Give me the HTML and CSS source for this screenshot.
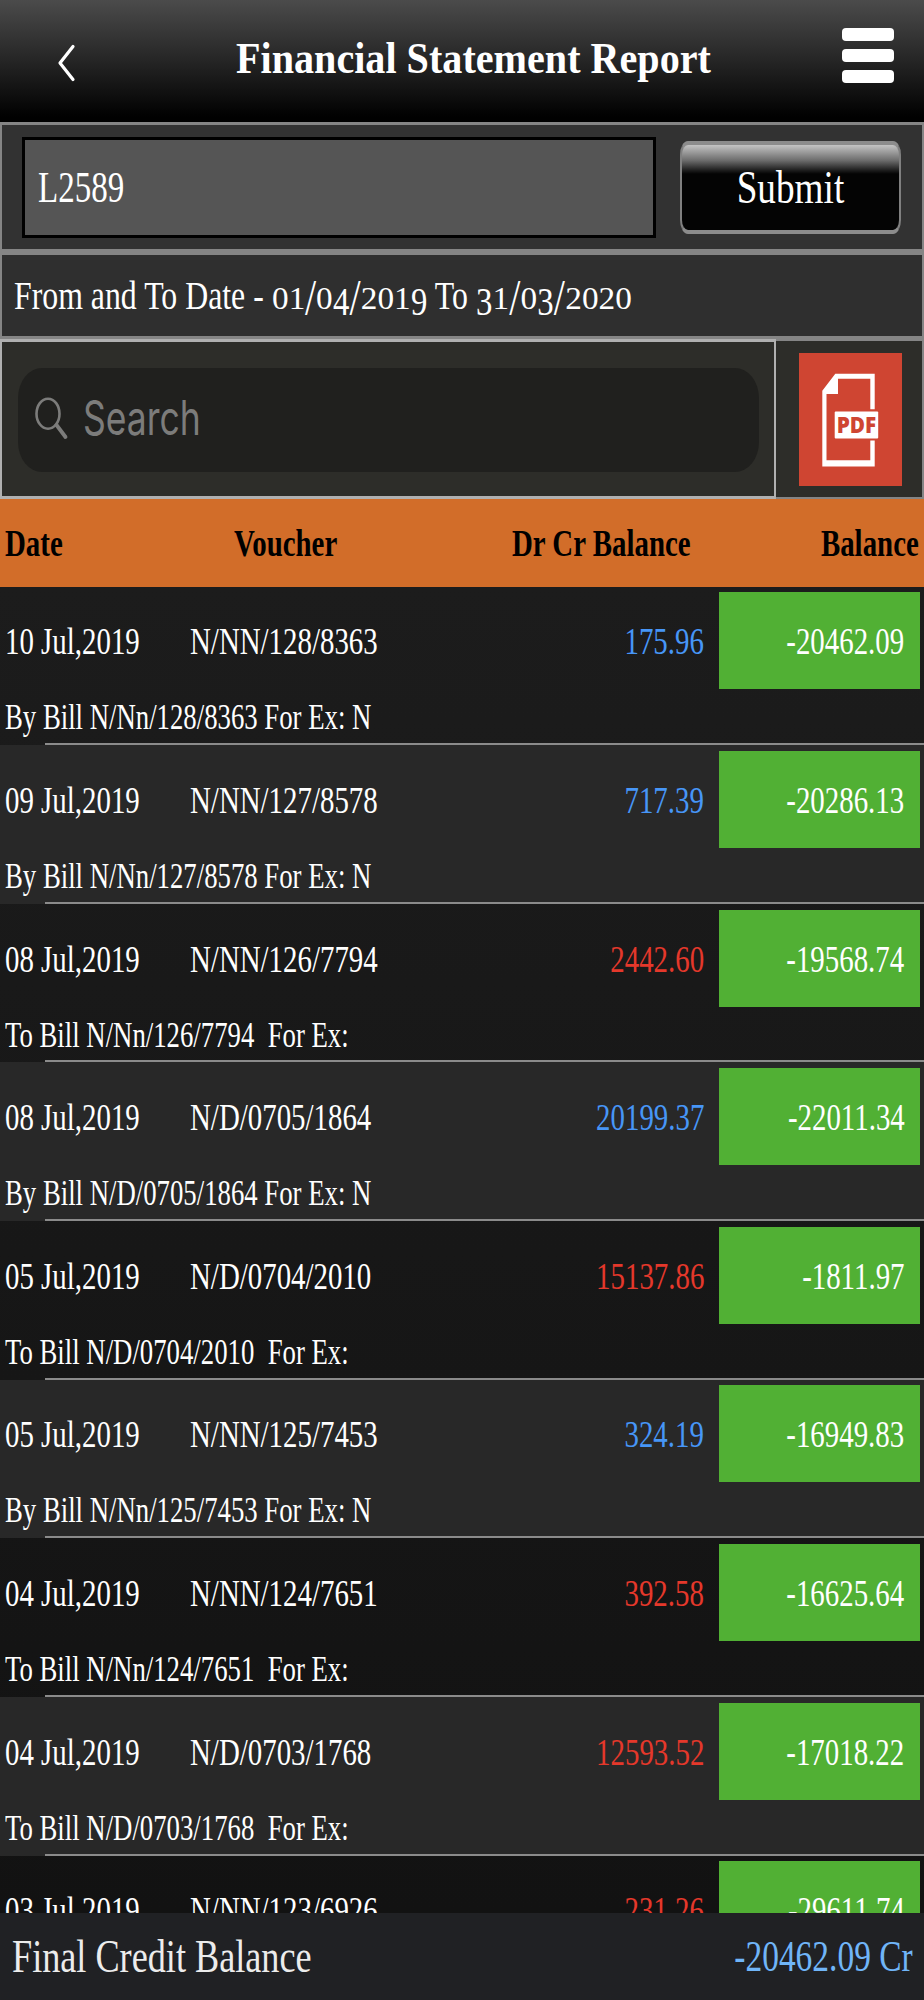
FILE: index.html
```html
<!DOCTYPE html>
<html lang="en">
<head>
    <meta charset="UTF-8">
    <meta name="viewport" content="width=device-width, initial-scale=1.0">
    <title>Financial Statement Report</title>
    <link rel="stylesheet" href="styles.css">
</head>
<body>

    <!-- Top bar -->
    <header class="topbar">
        <svg class="back" width="20" height="40" viewBox="0 0 20 40">
            <path d="M16 4.5 L3 21 L16 37.5" fill="none" stroke="#fff" stroke-width="3.2" stroke-linecap="round" stroke-linejoin="round"/>
        </svg>
        <h1><span class="text">Financial Statement Report</span></h1>
        <div class="menu">
            <i></i>
            <i></i>
            <i></i>
        </div>
    </header>

    <!-- Account code -->
    <section class="account">
        <div class="account-input"><span class="text">L2589</span></div>
        <div class="submit-btn"><span class="text">Submit</span></div>
    </section>

    <!-- Date range -->
    <section class="period">
        <span class="text">From and To Date - <span class="date"><b class="w2">01</b><b class="slash">/</b><b class="w1">0</b><b class="low">4</b><b class="slash">/</b><b class="w3">201</b><b class="low">9</b></span> To <span class="date"><b class="low">3</b><b class="w1">1</b><b class="slash">/</b><b class="w1">0</b><b class="low">3</b><b class="slash">/</b><b class="w4">2020</b></span></span>
    </section>

    <!-- Search and PDF export -->
    <section class="tools">
        <div class="search">
            <div class="search-box">
                <svg width="36" height="46" viewBox="0 0 36 46">
                    <ellipse cx="14" cy="17.7" rx="11.5" ry="15" fill="none" stroke="#7c7c7b" stroke-width="2.6"/>
                    <path d="M22.5 29 L31.5 41" stroke="#7c7c7b" stroke-width="3.8" stroke-linecap="round"/>
                </svg>
                <span class="text">Search</span>
            </div>
        </div>
        <div class="export">
            <svg width="103" height="133" viewBox="0 0 103 133">
                <rect width="103" height="133" fill="#cf4532"/>
                <path d="M36.3 20.7 H75.7 V56.3 H71.3 V25.7 H39 V41 H27.5 V107.3 H71.3 V87.5 H75.7 V113.5 H23.3 V37.7 Z" fill="#fff"/>
                <rect x="35.7" y="58.5" width="43.5" height="27" rx="1" fill="#fff"/>
                <text x="37.7" y="80" textLength="39.5" lengthAdjust="spacingAndGlyphs" class="pdf-label">PDF</text>
            </svg>
        </div>
    </section>

    <!-- Statement -->
    <div class="list-head">
        <span class="text">Date</span>
        <span class="text">Voucher</span>
        <span class="text">Dr Cr Balance</span>
        <span class="text right">Balance</span>
    </div>

    <main class="list">
        <div class="entry">
            <div class="entry-line">
                <span class="text">10 Jul,2019</span>
                <span class="text">N/NN/128/8363</span>
                <span class="text right credit">175.96</span>
                <div class="balance"><span class="text right">-20462.09</span></div>
            </div>
            <p><span class="text">By Bill N/Nn/128/8363 For Ex: N</span></p>
        </div>

        <div class="entry">
            <div class="entry-line">
                <span class="text">09 Jul,2019</span>
                <span class="text">N/NN/127/8578</span>
                <span class="text right credit">717.39</span>
                <div class="balance"><span class="text right">-20286.13</span></div>
            </div>
            <p><span class="text">By Bill N/Nn/127/8578 For Ex: N</span></p>
        </div>

        <div class="entry">
            <div class="entry-line">
                <span class="text">08 Jul,2019</span>
                <span class="text">N/NN/126/7794</span>
                <span class="text right debit">2442.60</span>
                <div class="balance"><span class="text right">-19568.74</span></div>
            </div>
            <p><span class="text">To Bill N/Nn/126/7794&nbsp; For Ex:</span></p>
        </div>

        <div class="entry">
            <div class="entry-line">
                <span class="text">08 Jul,2019</span>
                <span class="text">N/D/0705/1864</span>
                <span class="text right credit">20199.37</span>
                <div class="balance"><span class="text right">-22011.34</span></div>
            </div>
            <p><span class="text">By Bill N/D/0705/1864 For Ex: N</span></p>
        </div>

        <div class="entry">
            <div class="entry-line">
                <span class="text">05 Jul,2019</span>
                <span class="text">N/D/0704/2010</span>
                <span class="text right debit">15137.86</span>
                <div class="balance"><span class="text right">-1811.97</span></div>
            </div>
            <p><span class="text">To Bill N/D/0704/2010&nbsp; For Ex:</span></p>
        </div>

        <div class="entry">
            <div class="entry-line">
                <span class="text">05 Jul,2019</span>
                <span class="text">N/NN/125/7453</span>
                <span class="text right credit">324.19</span>
                <div class="balance"><span class="text right">-16949.83</span></div>
            </div>
            <p><span class="text">By Bill N/Nn/125/7453 For Ex: N</span></p>
        </div>

        <div class="entry">
            <div class="entry-line">
                <span class="text">04 Jul,2019</span>
                <span class="text">N/NN/124/7651</span>
                <span class="text right debit">392.58</span>
                <div class="balance"><span class="text right">-16625.64</span></div>
            </div>
            <p><span class="text">To Bill N/Nn/124/7651&nbsp; For Ex:</span></p>
        </div>

        <div class="entry">
            <div class="entry-line">
                <span class="text">04 Jul,2019</span>
                <span class="text">N/D/0703/1768</span>
                <span class="text right debit">12593.52</span>
                <div class="balance"><span class="text right">-17018.22</span></div>
            </div>
            <p><span class="text">To Bill N/D/0703/1768&nbsp; For Ex:</span></p>
        </div>

        <div class="entry">
            <div class="entry-line">
                <span class="text">03 Jul,2019</span>
                <span class="text">N/NN/123/6926</span>
                <span class="text right debit">231.26</span>
                <div class="balance"><span class="text right">-29611.74</span></div>
            </div>
        </div>
    </main>

    <!-- Total -->
    <footer class="total">
        <span class="text">Final Credit Balance</span>
        <span class="text right total-value">-20462.09 Cr</span>
    </footer>

</body>
</html>
```
FILE: styles.css
```css
* {
    box-sizing: border-box;
    margin: 0;
    padding: 0;
}

body {
    display: flex;
    flex-direction: column;
    height: 2000px;
    overflow: hidden;
    background-color: #131313;
    color: #fff;
    font-family: "Liberation Serif", "Times New Roman", serif;
    font-size: 38.5px;
}

/* Condensed lettering */
.text {
    display: block;
    white-space: nowrap;
    transform: scaleX(0.75);
    transform-origin: left center;
}

.text.right {
    transform-origin: right center;
    justify-self: end;
}

/* Top bar */
.topbar {
    display: flex;
    flex: none;
    align-items: center;
    justify-content: space-between;
    height: 122px;
    padding: 0 30px 0 57px;
    background: linear-gradient(#4b4b4b, #252525 50%, #020202 94%, #000);
}

.back {
    margin-top: 1px;
}

.topbar h1 {
    width: 476px;
    margin-top: -7px;
    margin-left: 28px;
    font-size: 45px;
}

.topbar h1 .text {
    transform: scaleX(0.892);
}

.menu {
    display: flex;
    flex-direction: column;
    gap: 8px;
    margin-top: -11px;
}

.menu i {
    width: 52px;
    height: 13px;
    border-radius: 4px;
    background-color: #fff;
}

/* Account code */
.account {
    display: flex;
    flex: none;
    align-items: center;
    justify-content: space-between;
    height: 130px;
    padding: 0 21px 0 20px;
    border: 2px solid #858585;
    border-top-width: 3px;
    border-bottom-width: 3px;
    background-color: #323232;
}

.account-input {
    display: flex;
    align-items: center;
    width: 634px;
    height: 101px;
    padding-left: 13px;
    border: 3px solid #000;
    background-color: #555;
    font-size: 44px;
}

.submit-btn {
    display: flex;
    align-items: center;
    justify-content: center;
    width: 221px;
    height: 93px;
    border: 2px solid #808080;
    border-top: 4px solid #8c8c8c;
    border-bottom: 4px solid #8c8c8c;
    border-radius: 8px / 14px;
    background: linear-gradient(#c4c4c4, #6d6d6d 18%, #1c1c1c 30%, #040404 34%);
    font-size: 46px;
}

.submit-btn .text {
    transform: scaleX(0.81);
    transform-origin: center;
}

/* Date range */
.period {
    display: flex;
    flex: none;
    align-items: center;
    height: 87px;
    padding-left: 12px;
    border: 2px solid #858585;
    border-top-width: 3px;
    border-bottom-width: 3px;
    background-color: #2f2f2f;
    font-size: 39.8px;
    line-height: 46px;
}

.period .text {
    transform: scaleX(0.799);
}

/* Old style figures */
.date b {
    display: inline-block;
    font-size: 30.6px;
    font-weight: normal;
    line-height: 1;
    transform: scaleX(1.36);
    transform-origin: left;
}

.date .w1 { width: 20.8px; }
.date .w2 { width: 41.6px; }
.date .w3 { width: 62.4px; }
.date .w4 { width: 83.2px; }

.date .low {
    width: 20.8px;
    height: 30px;
    font-size: 41px;
    line-height: 30px;
    vertical-align: -6.5px;
    transform: none;
}

.date .slash {
    width: 14.3px;
    height: 30px;
    font-size: 50px;
    line-height: 30px;
    vertical-align: -5.5px;
    transform: none;
}

/* Search and PDF export */
.tools {
    display: flex;
    flex: none;
    height: 160px;
    background-color: #2d2d29;
}

.search {
    width: 776px;
    padding: 26px 16px;
    border: 2px solid #b0b0b0;
    border-top-width: 3px;
    border-bottom-width: 3px;
}

.search-box {
    display: flex;
    align-items: center;
    width: 741px;
    height: 104px;
    padding-left: 16px;
    border-radius: 24px / 30px;
    background-color: #20201e;
    color: #7c7c7b;
    font-family: Inter, "Liberation Sans", sans-serif;
    font-size: 48px;
}

.search-box svg {
    margin-right: 13px;
    margin-top: -3px;
}

.search-box .text {
    margin-top: -5px;
    transform: scaleX(0.74);
}

.export {
    flex: 1;
    padding: 12px 0 0 23px;
    border: solid #858585;
    border-width: 2px 2px 2px 0;
}

.export svg {
    display: block;
}

.pdf-label {
    fill: #cf4532;
    font-family: "Open Sans", sans-serif;
    font-size: 22.5px;
    font-weight: 800;
}

/* Statement */
.list-head {
    display: grid;
    flex: none;
    grid-template-columns: 229px 278px 1fr auto;
    align-items: center;
    height: 87.5px;
    padding: 0 5px;
    background-color: #d26d29;
    color: #000;
    font-size: 38px;
    font-weight: bold;
}

.list-head .text {
    transform: scaleX(0.76);
}

.list {
    flex: 1;
    min-height: 0;
    overflow: hidden;
    background: linear-gradient(#1c1c1c, #121212);
}

.entry {
    position: relative;
    height: 158.625px;
    padding-top: 5.8px;
}

.entry:nth-child(even) {
    background-color: #282828;
}

/* Inset divider */
.entry::after {
    content: "";
    position: absolute;
    left: 45px;
    right: 0;
    bottom: 0;
    height: 2px;
    background-color: #8b8b8b;
}

.entry-line {
    display: grid;
    grid-template-columns: 185px 1fr 200px 201px;
    align-items: center;
    height: 97px;
    padding: 0 4.5px 0 5px;
}

.entry-line > .text {
    margin-top: 1px;
}

.entry-line > .right {
    margin-right: 14.5px;
}

.balance {
    display: flex;
    align-items: center;
    justify-content: flex-end;
    height: 97px;
    padding: 1px 15px 0 0;
    background-color: #51b034;
}

.entry p {
    padding: 1px 0 0 5px;
    font-size: 36px;
    line-height: 55px;
}

.entry p .text {
    transform: scaleX(0.743);
}

.credit {
    color: #4796f7;
}

.debit {
    color: #e5382b;
}

/* Total */
.total {
    display: flex;
    flex: none;
    align-items: center;
    justify-content: space-between;
    height: 87px;
    padding: 0 11px 0 12px;
    background-color: #202124;
    color: #ececec;
    font-size: 46px;
}

.total .text {
    transform: scaleX(0.787);
}

.total .total-value {
    color: #70b5f8;
    font-size: 44px;
    transform: scaleX(0.76);
}
```
